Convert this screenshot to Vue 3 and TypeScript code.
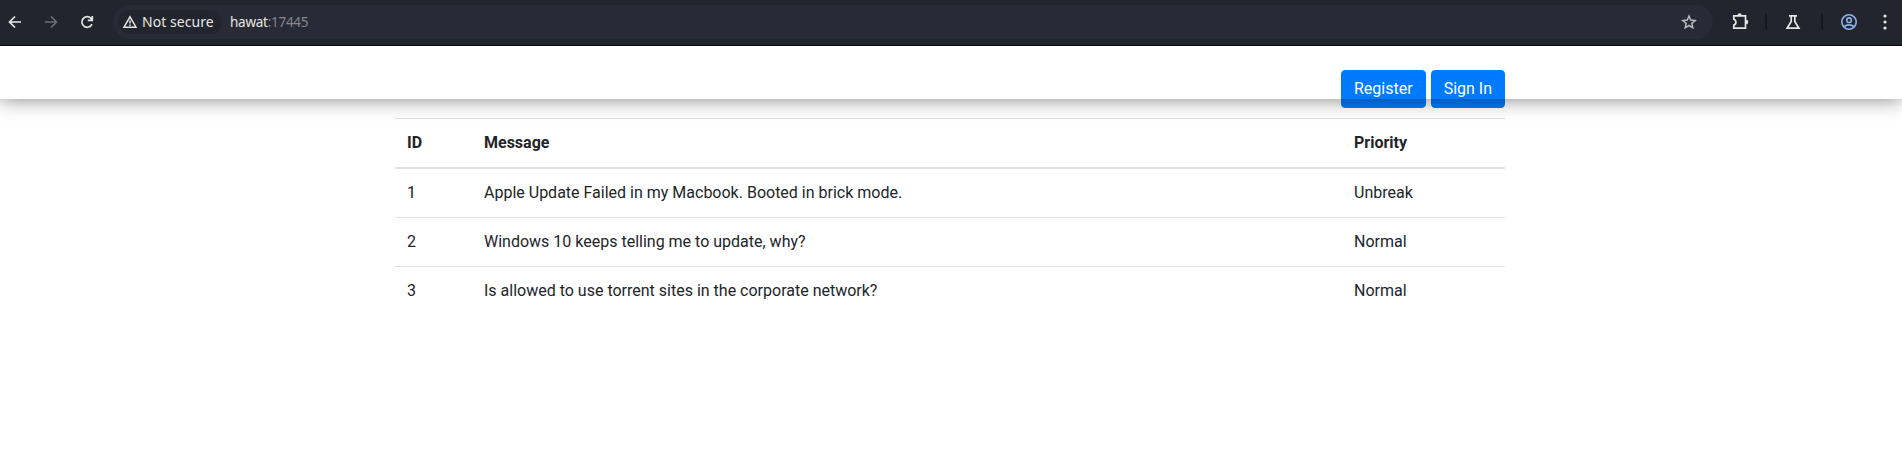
<script setup lang="ts">
interface Issue {
  id: number
  message: string
  priority: string
}

const issues: Issue[] = [
  { id: 1, message: 'Apple Update Failed in my Macbook. Booted in brick mode.', priority: 'Unbreak' },
  { id: 2, message: 'Windows 10 keeps telling me to update, why?', priority: 'Normal' },
  { id: 3, message: 'Is allowed to use torrent sites in the corporate network?', priority: 'Normal' },
]
</script>

<template>
  <div class="window">
    <div class="toolbar">
      <div class="nav">
        <svg class="icon" viewBox="0 0 16 16"><path d="M14 8H3M8 2.5 2.5 8 8 13.5" /></svg>
        <svg class="icon dim" viewBox="0 0 16 16"><path d="M2 8h11M8 2.5 13.5 8 8 13.5" /></svg>
        <svg class="icon" viewBox="0 0 16 16"><path d="M13 10.2A5.3 5.3 0 1 1 12 4.3L13.2 5.6M13.3 2v4.4H8.8" /></svg>
      </div>
      <div class="address">
        <div class="chip">
          <svg class="warn" viewBox="0 0 16 16"><path d="M8 2.8 14 13.2H2Z" /><path d="M8 6.4v3.2M8 10.6v1.4" /></svg>
          <span>Not secure</span>
        </div>
        <div class="url">hawat<span class="port">:17445</span></div>
        <svg class="star" viewBox="0 0 16 16"><path d="m8 2 1.7 4.1 4.5.4-3.4 2.9 1 4.4L8 11.5l-3.8 2.3 1-4.4-3.4-2.9 4.5-.4Z" /></svg>
      </div>
      <div class="tools">
        <svg class="puzzle" viewBox="0 0 18 18"><path d="M2.8 2.9h11.7v12.3H2.8v-3.1c2.8-.8 2.8-5 0-5.8Z" /><path class="solid" d="M6.4 2.5a2.2 2.2 0 0 1 4.4 0ZM15 6.7a2.2 2.2 0 0 1 0 4.6Z" /></svg>
        <span class="rule"></span>
        <svg class="flask" viewBox="0 0 16 16"><path d="M4 1.8h8M6.2 1.8v5.6L2.1 14.2h11.8L9.8 7.4V1.8" /></svg>
        <span class="rule"></span>
        <svg class="person" viewBox="0 0 18 18"><circle cx="9" cy="9" r="7.2" /><circle cx="9" cy="7.2" r="2.3" /><path d="M3.8 13.8c2.8-2.6 7.6-2.6 10.4 0" /></svg>
        <svg class="more" viewBox="0 0 6 16"><circle cx="3" cy="2" r="1.6" /><circle cx="3" cy="8" r="1.6" /><circle cx="3" cy="14" r="1.6" /></svg>
      </div>
    </div>
    <main class="page">
      <div class="header-shadow"></div>
      <div class="container">
        <div class="actions">
          <button class="btn" type="button">Register</button>
          <button class="btn" type="button">Sign In</button>
        </div>
        <table class="table">
          <thead>
            <tr><th class="col-id">ID</th><th class="col-message">Message</th><th>Priority</th></tr>
          </thead>
          <tbody>
            <tr v-for="issue in issues" :key="issue.id">
              <td>{{ issue.id }}</td><td>{{ issue.message }}</td><td>{{ issue.priority }}</td>
            </tr>
          </tbody>
        </table>
      </div>
    </main>
  </div>
</template>

<style>
body {
  margin: 0;
  overflow: hidden;
}
</style>

<style scoped>
.window {
  height: 453px;
  overflow: hidden;
  background: #fff;
}
.toolbar {
  box-sizing: border-box;
  display: flex;
  align-items: center;
  height: 46px;
  padding: 0 0 1px;
  background: #22252e;
  border-bottom: 1px solid #08090d;
  font-family: "Noto Sans", sans-serif;
}
svg {
  display: block;
  flex: none;
  fill: none;
  stroke: #e6e6e3;
  stroke-width: 1.7;
}
.nav {
  display: flex;
  gap: 20px;
  width: 106px;
  padding-left: 7px;
}
.icon {
  width: 16px;
  height: 16px;
}
.dim {
  stroke: #6d6e73;
}
.address {
  box-sizing: border-box;
  display: flex;
  align-items: center;
  width: 1600px;
  height: 34px;
  padding: 0 16px 0 5px;
  border-radius: 17px;
  background: #282a36;
}
.chip {
  box-sizing: border-box;
  display: flex;
  align-items: center;
  gap: 4px;
  width: 104px;
  height: 24px;
  padding: 0 0 1px 4px;
  border-radius: 12px;
  background: #22252e;
  color: #e6e6e3;
  font-size: 14px;
  letter-spacing: 0.06px;
  white-space: nowrap;
}
.warn {
  width: 16px;
  height: 16px;
  stroke-width: 1.5;
}
.url {
  flex: 1;
  padding: 0 0 1px 8px;
  color: #e6e6e3;
  font-size: 13.5px;
  letter-spacing: -0.27px;
}
.port {
  color: #85868c;
}
.star {
  width: 16px;
  height: 16px;
  stroke: #b9bab9;
  stroke-width: 1.5;
}
.tools {
  display: flex;
  align-items: center;
  padding-left: 18px;
}
.puzzle,
.person {
  width: 18px;
  height: 18px;
}
.puzzle .solid {
  fill: #e6e6e3;
  stroke: none;
}
.rule {
  width: 2px;
  height: 16px;
  background: #15171d;
}
.puzzle + .rule {
  margin-left: 16px;
}
.flask {
  width: 16px;
  height: 16px;
  margin: 0 20px 0 18px;
}
.person {
  margin-left: 17px;
  stroke: #8ab0f0;
  stroke-width: 1.6;
}
.more {
  width: 6px;
  height: 16px;
  margin-left: 24px;
  fill: #e6e6e3;
  stroke: none;
}
.page {
  position: relative;
  color: #212529;
  font: 16px/24px Roboto, sans-serif;
}
.header-shadow {
  position: absolute;
  inset: 0 0 auto;
  z-index: 1;
  height: 53px;
  box-shadow: 0 0 20px rgba(0, 0, 0, 0.5);
  clip-path: inset(0 0 -30px);
  pointer-events: none;
}
.container {
  width: 1110px;
  margin-left: 395px;
  padding-top: 24px;
}
.actions {
  display: flex;
  justify-content: flex-end;
  gap: 5px;
  margin-bottom: 10px;
}
.btn {
  height: 38px;
  padding: 6px 12px;
  border: 1px solid #007bff;
  border-radius: 4px;
  background: #007bff;
  color: #fff;
  font: inherit;
}
.table {
  width: 100%;
  border-collapse: collapse;
  table-layout: fixed;
}
.table th,
.table td {
  padding: 12px;
  border-top: 1px solid #dee2e6;
  text-align: left;
}
.table thead th {
  border-bottom: 2px solid #dee2e6;
  font-weight: 700;
}
.col-id {
  width: 53px;
}
.col-message {
  width: 846px;
}
</style>
